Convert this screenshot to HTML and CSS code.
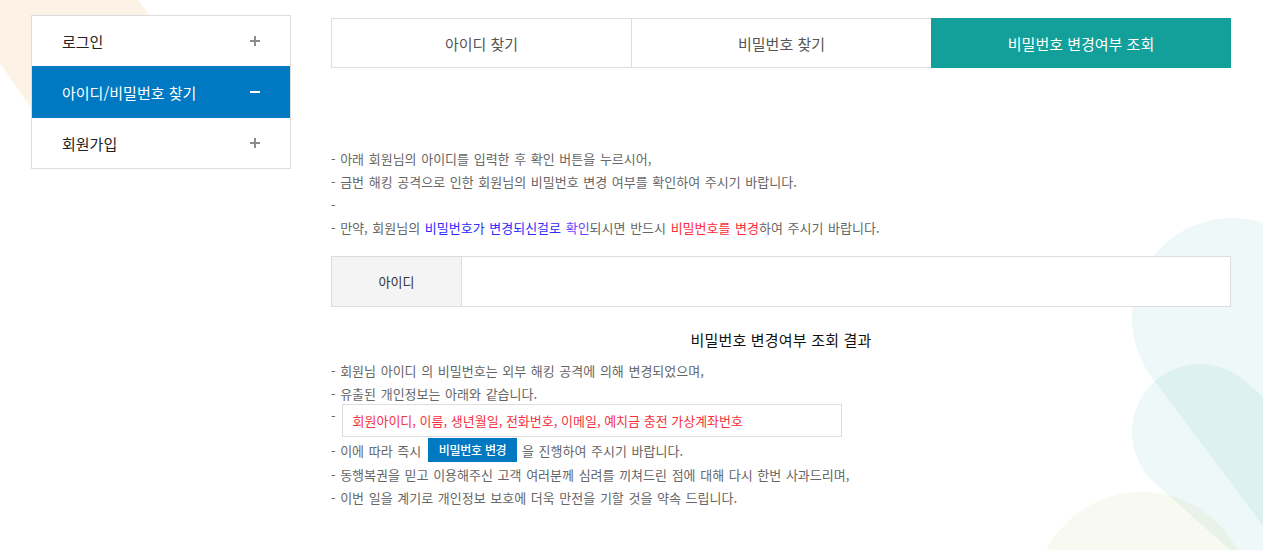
FILE: index.html
```html
<!DOCTYPE html>
<html lang="ko">
<head>
  <meta charset="UTF-8">
  <meta name="viewport" content="width=device-width, initial-scale=1.0">
  <title>비밀번호 변경여부 조회</title>
  <link rel="stylesheet" href="styles.css">
</head>

<body>
  <div class="page-deco" aria-hidden="true">
    <svg width="1263" height="550" viewBox="0 0 1263 550">
      <polygon points="0,0 138,0 255,160 70,165 0,63" fill="#fdf2e6"/>
      <line x1="1232" y1="318" x2="1532" y2="718" stroke="rgb(0,150,150)" stroke-opacity="0.065" stroke-width="200" stroke-linecap="round"/>
      <line x1="1200" y1="432" x2="1575" y2="767" stroke="rgb(0,150,150)" stroke-opacity="0.065" stroke-width="136" stroke-linecap="round"/>
      <circle cx="1142" cy="600" r="108" fill="rgb(190,200,110)" fill-opacity="0.1"/>
    </svg>
  </div>

  <div class="member-wrap">

    <aside class="member-side">
      <ul>
        <li>
          <a href="#">로그인
            <svg width="10" height="10" viewBox="0 0 10 10"><path d="M5 0v10M0 5h10" stroke="#8c8c8c" stroke-width="2"/></svg>
          </a>
        </li>
        <li class="is-active">
          <a href="#">아이디/비밀번호 찾기
            <svg width="10" height="10" viewBox="0 0 10 10"><path d="M0 5h10" stroke="#fff" stroke-width="2"/></svg>
          </a>
        </li>
        <li>
          <a href="#">회원가입
            <svg width="10" height="10" viewBox="0 0 10 10"><path d="M5 0v10M0 5h10" stroke="#8c8c8c" stroke-width="2"/></svg>
          </a>
        </li>
      </ul>
    </aside>

    <main class="member-content">
      <ul class="member-tabs">
        <li><a href="#">아이디 찾기</a></li>
        <li><a href="#">비밀번호 찾기</a></li>
        <li class="is-active"><a href="#">비밀번호 변경여부 조회</a></li>
      </ul>

      <ul class="member-notice">
        <li>- 아래 회원님의 아이디를 입력한 후 확인 버튼을 누르시어,</li>
        <li>- 금번 해킹 공격으로 인한 회원님의 비밀번호 변경 여부를 확인하여 주시기 바랍니다.</li>
        <li>-</li>
        <li>- 만약, 회원님의 <span class="c-blue">비밀번호가 변경되신걸로</span> <span class="c-violet">확인</span>되시면 반드시 <span class="c-red">비밀번호를 변경</span>하여 주시기 바랍니다.</li>
      </ul>

      <div class="member-id-row">
        <div class="member-id-label">아이디</div>
        <div class="member-id-value"></div>
      </div>

      <h3 class="member-result-title">비밀번호 변경여부 조회 결과</h3>

      <ul class="member-result">
        <li>- 회원님 아이디 의 비밀번호는 외부 해킹 공격에 의해 변경되었으며,</li>
        <li>- 유출된 개인정보는 아래와 같습니다.</li>
        <li class="member-result-box">-
          <div class="member-leak">회원아이디, 이름, 생년월일, 전화번호, 이메일, 예치금 충전 가상계좌번호</div>
        </li>
        <li class="member-result-btn">- 이에 따라 즉시 <a href="#" class="member-btn">비밀번호 변경</a> 을 진행하여 주시기 바랍니다.</li>
        <li>- 동행복권을 믿고 이용해주신 고객 여러분께 심려를 끼쳐드린 점에 대해 다시 한번 사과드리며,</li>
        <li>- 이번 일을 계기로 개인정보 보호에 더욱 만전을 기할 것을 약속 드립니다.</li>
      </ul>
    </main>

  </div>
</body>

</html>
```

FILE: styles.css
```css
html {
  background-color: #fff;
}

body {
  margin: 0;
  font-family: "Noto Sans CJK KR", "Noto Sans", sans-serif;
  color: #666;
  font-size: 13px;
}

ul {
  margin: 0;
  padding: 0;
  list-style: none;
}

a {
  color: inherit;
  text-decoration: none;
}

.page-deco {
  position: absolute;
  top: 0;
  left: 0;
  width: 1263px;
  height: 550px;
  overflow: hidden;
  z-index: -1;
}

.page-deco svg {
  display: block;
}

.member-wrap {
  display: flex;
  gap: 40px;
  padding: 15px 0 0 31px;
}

/* side menu */
.member-side {
  flex: 0 0 260px;
  align-self: flex-start;
}

.member-side ul {
  border: 1px solid #ddd;
  background-color: #fff;
}

.member-side li a {
  display: flex;
  align-items: center;
  justify-content: space-between;
  height: 50px;
  padding: 0 30px 0 30px;
  font-size: 15px;
  color: #222;
}

.member-side li.is-active a {
  height: 52px;
  background-color: #0079c2;
  color: #fff;
}

/* content */
.member-content {
  width: 900px;
  padding-top: 3px;
}

.member-tabs {
  display: grid;
  grid-template-columns: repeat(3, 1fr);
}

.member-tabs li a {
  display: flex;
  align-items: center;
  justify-content: center;
  height: 48px;
  border: 1px solid #ddd;
  border-right: none;
  background-color: #fff;
  font-size: 15px;
  color: #555;
}

.member-tabs li:last-child a {
  border-right: 1px solid #ddd;
}

.member-tabs li.is-active a {
  background-color: #13a09a;
  border-color: #13a09a;
  color: #fff;
}

.member-notice {
  margin-top: 79px;
}

.member-notice li,
.member-result li {
  line-height: 23px;
  word-spacing: 1px;
}

.c-blue {
  color: #2b2bff;
}

.c-violet {
  color: #6a45ff;
}

.c-red {
  color: #ff2a3a;
}

.member-id-row {
  display: flex;
  height: 49px;
  margin-top: 17px;
  border: 1px solid #ddd;
  background-color: #fff;
}

.member-id-label {
  display: flex;
  align-items: center;
  justify-content: center;
  width: 129px;
  border-right: 1px solid #ddd;
  background-color: #f4f4f4;
  color: #333;
}

.member-id-value {
  flex: 1;
}

.member-result-title {
  margin: 22px 0 8px;
  text-align: center;
  font-size: 15px;
  font-weight: normal;
  line-height: 22px;
  letter-spacing: 0.2px;
  color: #111;
}

.member-result li.member-result-box {
  display: flex;
  align-items: flex-start;
  margin-top: -1px;
}

.member-leak {
  box-sizing: border-box;
  width: 500px;
  height: 33px;
  margin-left: 6px;
  padding-left: 10px;
  border: 1px solid #ddd;
  background-color: #fff;
  line-height: 31px;
  word-spacing: 0;
  color: #f5333f;
}

.member-result li.member-result-btn {
  height: 25px;
  line-height: 25px;
  margin-top: 1px;
}

.member-btn {
  display: inline-block;
  height: 24px;
  padding: 0 11px;
  margin-left: 2px;
  font-size: 12px;
  font-weight: 500;
  letter-spacing: -0.3px;
  word-spacing: 0;
  line-height: 24px;
  vertical-align: top;
  background-color: #0079c2;
  color: #fff;
}
```
